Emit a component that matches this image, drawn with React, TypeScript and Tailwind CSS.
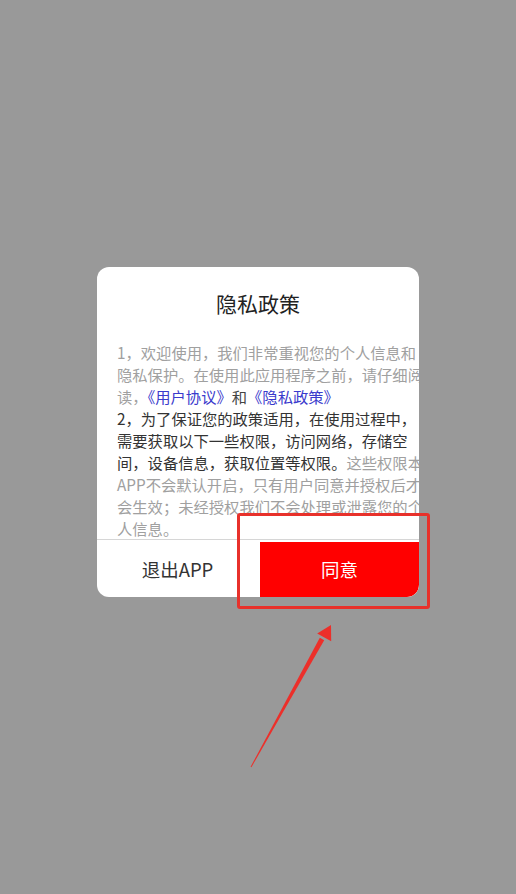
import React from "react"

const font = { fontFamily: '"Noto Sans CJK SC", "Noto Sans", sans-serif' }

export default function App() {
    return (
        <div className="relative h-[894px] w-[516px] overflow-hidden bg-[#999999]" style={font}>
            <div className="pl-[97px] pt-[267px]">
                <div className="flex h-[330px] w-[322px] flex-col overflow-hidden rounded-[12px] bg-white">
                    <div className="flex h-[74px] shrink-0 items-center justify-center text-[21px] text-[#222222]">
                        隐私政策
                    </div>
                    <div className="h-[198px] shrink-0 overflow-hidden pl-[20px] text-[15.3px] leading-[22px] text-[#a0a0a0]">
                        <div className="whitespace-nowrap">1，欢迎使用，我们非常重视您的个人信息和</div>
                        <div className="whitespace-nowrap">隐私保护。在使用此应用程序之前，请仔细阅</div>
                        <div className="whitespace-nowrap">
                            读，<span className="text-[#3a3acc]">《用户协议》</span>
                            <span className="text-[#444444]">和</span>
                            <span className="text-[#3a3acc]">《隐私政策》</span>
                        </div>
                        <div className="whitespace-nowrap text-[#333333]">2，为了保证您的政策适用，在使用过程中，</div>
                        <div className="whitespace-nowrap text-[#333333]">需要获取以下一些权限，访问网络，存储空</div>
                        <div className="whitespace-nowrap">
                            <span className="text-[#333333]">间，设备信息，获取位置等权限。</span>这些权限本
                        </div>
                        <div className="whitespace-nowrap">APP不会默认开启，只有用户同意并授权后才</div>
                        <div className="whitespace-nowrap">会生效；未经授权我们不会处理或泄露您的个</div>
                        <div className="whitespace-nowrap">人信息。</div>
                    </div>
                    <div className="h-px shrink-0 bg-[#d6d6d6]" />
                    <div className="grid flex-1 grid-cols-2 pt-[2px]">
                        <button className="flex items-center justify-center text-[18.5px] text-[#333333]">退出APP</button>
                        <button className="ml-[2px] flex items-center justify-center rounded-br-[12px] bg-[#ff0000] text-[18.5px] text-white">
                            同意
                        </button>
                    </div>
                </div>
            </div>

            {/* annotation box */}
            <div className="absolute left-[237px] top-[513px] h-[96px] w-[193px] rounded-[3px] border-[3.5px] border-[#e8312b]" />

            {/* annotation arrow */}
            <svg className="absolute left-0 top-0" width="516" height="894" viewBox="0 0 516 894">
                <polygon points="250.6,766.8 251.4,767.2 324.2,640.2 319.8,637.8" fill="#ec2f2a" />
                <polygon points="331,625 331.2,641.2 317.2,633.4" fill="#ec2f2a" />
            </svg>
        </div>
    )
}
